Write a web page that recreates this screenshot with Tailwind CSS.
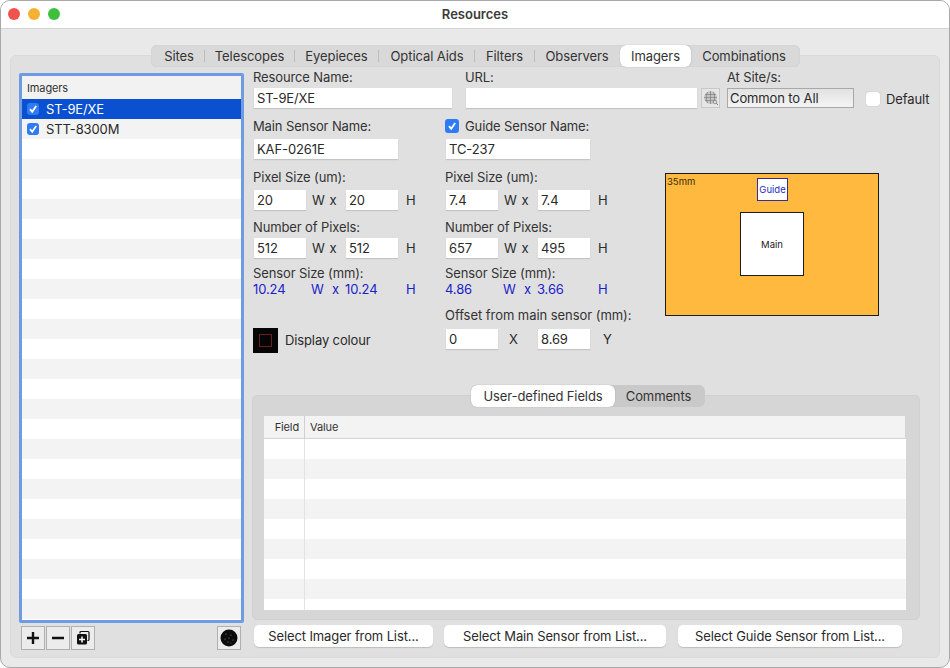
<!doctype html>
<html>
<head>
<meta charset="utf-8">
<script src="https://cdn.jsdelivr.net/npm/@tailwindcss/browser@4"></script>
</head>
<body class="bg-white overflow-hidden">
<div class="w-[950px] h-[668px] flex flex-col bg-[#e9e9e9] border border-[#a8a8a8] rounded-[10px] overflow-hidden font-['Inter',sans-serif] text-[13px] leading-[16px] tracking-[-0.12px] text-[#2a2a2a]">
  <div class="relative h-[28px] shrink-0 bg-white border-b border-[#d4d4d4] flex items-center justify-center">
    <div class="absolute left-[7px] top-[7px] flex gap-[8px]">
      <span class="w-[12px] h-[12px] rounded-full bg-[#f0524f]"></span>
      <span class="w-[12px] h-[12px] rounded-full bg-[#f6b133]"></span>
      <span class="w-[12px] h-[12px] rounded-full bg-[#3ec03f]"></span>
    </div>
    <span class="mb-[2px] font-semibold text-[13px] text-[#3a3a3a] tracking-[0px]">Resources</span>
  </div>

  <div class="relative flex-1 px-[9px] pb-[9px] pt-[26px]">
    <div class="absolute left-[150px] top-[16px] z-10 h-[22px] w-[649px] flex items-center rounded-[6px] bg-[#d9d9d9] shadow-[inset_0_0_1px_#bbb] text-[#333] tracking-[-0.08px]">
      <span class="w-[53px] pl-[3px] text-center">Sites</span><i class="w-px h-[12px] bg-[#bdbdbd]"></i>
      <span class="w-[89px] text-center">Telescopes</span><i class="w-px h-[12px] bg-[#bdbdbd]"></i>
      <span class="w-[83px] text-center">Eyepieces</span><i class="w-px h-[12px] bg-[#bdbdbd]"></i>
      <span class="w-[95px] pl-px text-center">Optical Aids</span><i class="w-px h-[12px] bg-[#bdbdbd]"></i>
      <span class="w-[59px] text-center">Filters</span><i class="w-px h-[12px] bg-[#bdbdbd]"></i>
      <span class="w-[84px] text-center">Observers</span>
      <span class="ml-px w-[71px] h-[22px] flex items-center justify-center bg-white rounded-[6px] shadow-[0_0_1px_#888]">Imagers</span>
      <span class="flex-1 pr-[3px] text-center">Combinations</span>
    </div>

    <div class="h-full rounded-[6px] bg-[#e0e0e0] border border-[#d9d9d9] flex pl-[8px] pr-[19px]">
      <!-- left column -->
      <div class="w-[225px] shrink-0 flex flex-col pt-[17px]">
        <div class="h-[550px] border-[3px] border-[#6f9be2] rounded-[2px] bg-white overflow-hidden flex flex-col">
          <div class="h-[23px] shrink-0 bg-[#f2f2f2] pl-[5px] flex items-center text-[11px] text-[#333]">Imagers</div>
          <div class="flex-1 bg-[repeating-linear-gradient(#ffffff_0_20px,#f3f3f3_20px_40px)]">
            <div class="h-[20px] bg-[#0a50d0] text-white flex items-center pl-[5px] gap-[7px]">
              <span class="w-[12px] h-[12px] rounded-[3px] bg-[#2f7bf5] flex items-center justify-center">
                <svg viewBox="0 0 12 12" class="w-[12px] h-[12px]"><path d="M3 6.2 5.2 8.8 9.2 3" fill="none" stroke="#fff" stroke-width="1.8"/></svg>
              </span>
              <span>ST-9E/XE</span>
            </div>
            <div class="h-[20px] flex items-center pl-[5px] gap-[7px]">
              <span class="w-[12px] h-[12px] rounded-[3px] bg-[#2f7bf5] flex items-center justify-center">
                <svg viewBox="0 0 12 12" class="w-[12px] h-[12px]"><path d="M3 6.2 5.2 8.8 9.2 3" fill="none" stroke="#fff" stroke-width="1.8"/></svg>
              </span>
              <span>STT-8300M</span>
            </div>
          </div>
        </div>
        <div class="flex items-center mt-[3px] pl-[2px]">
          <button class="w-[24px] h-[24px] bg-[#ececec] border border-[#b0b0b0] flex items-center justify-center">
            <svg viewBox="0 0 16 16" class="w-[16px] h-[16px]"><path d="M8 2v12M2 8h12" stroke="#111" stroke-width="2.4"/></svg>
          </button>
          <button class="w-[24px] h-[24px] ml-[1px] bg-[#ececec] border border-[#b0b0b0] flex items-center justify-center">
            <svg viewBox="0 0 16 16" class="w-[16px] h-[16px]"><path d="M2 8h12" stroke="#111" stroke-width="2.4"/></svg>
          </button>
          <button class="w-[24px] h-[24px] ml-[1px] bg-[#ececec] border border-[#b0b0b0] flex items-center justify-center">
            <svg viewBox="0 0 16 16" class="w-[16px] h-[16px]"><path d="M5 3.5V2.5a1 1 0 0 1 1-1h7a1 1 0 0 1 1 1v7a1 1 0 0 1-1 1h-.5" fill="none" stroke="#111" stroke-width="1.2"/><rect x="2" y="4" width="10" height="10.5" rx="1.5" fill="#111"/><path d="M7 6.5v6M4 9.5h6" stroke="#fff" stroke-width="1.5"/></svg>
          </button>
          <button class="w-[24px] h-[24px] ml-[122px] bg-[#ececec] border border-[#b0b0b0] flex items-center justify-center">
            <svg viewBox="0 0 18 18" class="w-[18px] h-[18px]"><circle cx="9" cy="9" r="8.5" fill="#0c0c0c"/><g fill="#999"><circle cx="6" cy="5" r=".5"/><circle cx="11" cy="6" r=".5"/><circle cx="5" cy="10" r=".5"/><circle cx="9" cy="9" r=".5"/><circle cx="13" cy="11" r=".5"/><circle cx="8" cy="13" r=".5"/><circle cx="11" cy="14" r=".4"/></g></svg>
          </button>
        </div>
      </div>

      <!-- right column -->
      <div class="flex-1 flex flex-col pl-[9px] pt-[13px]">
        <div class="flex h-[41px]">
          <div class="w-[212px] shrink-0">
            <div class="h-[16px] text-[#333]">Resource Name:</div>
            <div class="ml-px mt-[3px] w-[198px] h-[20px] bg-white shadow-[0_1px_1px_#c4c4c4] px-[3px] flex items-center">ST-9E/XE</div>
          </div>
          <div class="w-[262px] shrink-0">
            <div class="h-[16px] text-[#333]">URL:</div>
            <div class="mt-[3px] flex items-center">
              <div class="ml-px w-[231px] h-[20px] bg-white shadow-[0_1px_1px_#c4c4c4]"></div>
              <div class="ml-[4px] w-[19px] h-[20px] bg-[#e6e6e6] border border-[#c8c8c8] flex items-center justify-center">
                <svg viewBox="0 0 16 16" class="w-[16px] h-[16px]"><circle cx="7.500" cy="7.500" r="6.500" fill="#c4c4c4"/><path d="M1 7.500h13M2 4.500h11M2 10.500h11M7.500 1v13M4.500 2c-1.500 3.500-1.500 8 0 11M10.500 2c1.500 3.500 1.500 8 0 11" fill="none" stroke="#777" stroke-width=".6"/><circle cx="12" cy="12" r="1.800" fill="#ddd" stroke="#777" stroke-width=".7"/><path d="M13.300 13.300 15 15" stroke="#777" stroke-width=".9"/></svg>
              </div>
            </div>
          </div>
          <div class="w-[139px] shrink-0">
            <div class="h-[16px] text-[#333]">At Site/s:</div>
            <div class="mt-[3px] w-[127px] h-[20px] border border-[#a9a9a9] bg-gradient-to-b from-[#e2e2e2] to-[#f4f4f4] px-[2px] flex items-center">Common to All</div>
          </div>
          <div class="flex items-center pt-[19px] gap-[6px]">
            <span class="w-[14px] h-[14px] rounded-[3px] bg-white shadow-[0_0_1px_#999]"></span>
            <span>Default</span>
          </div>
        </div>

        <div class="flex h-[278px]">
          <!-- main sensor -->
          <div class="w-[192px] shrink-0 flex flex-col">
            <div class="mt-[8px] h-[16px] text-[#333]">Main Sensor Name:</div>
            <div class="ml-px mt-[5px] w-[144px] h-[20px] bg-white shadow-[0_1px_1px_#c4c4c4] px-[3px] flex items-center">KAF-0261E</div>
            <div class="mt-[10px] h-[16px] text-[#333]">Pixel Size (um):</div>
            <div class="mt-[5px] flex items-center h-[20px]">
              <div class="ml-px w-[52px] h-[20px] bg-white shadow-[0_1px_1px_#c4c4c4] px-[3px] flex items-center">20</div>
              <span class="ml-[6px] w-[14px]">W</span><span class="w-[14px] text-center">x</span>
              <div class="ml-[6px] w-[52px] h-[20px] bg-white shadow-[0_1px_1px_#c4c4c4] px-[3px] flex items-center">20</div>
              <span class="ml-[8px]">H</span>
            </div>
            <div class="mt-[9px] h-[16px] text-[#333]">Number of Pixels:</div>
            <div class="mt-[3px] flex items-center h-[20px]">
              <div class="ml-px w-[52px] h-[20px] bg-white shadow-[0_1px_1px_#c4c4c4] px-[3px] flex items-center">512</div>
              <span class="ml-[6px] w-[14px]">W</span><span class="w-[14px] text-center">x</span>
              <div class="ml-[6px] w-[52px] h-[20px] bg-white shadow-[0_1px_1px_#c4c4c4] px-[3px] flex items-center">512</div>
              <span class="ml-[8px]">H</span>
            </div>
            <div class="mt-[7px] h-[16px] text-[#333]">Sensor Size (mm):</div>
            <div class="flex h-[16px] text-[#1a22c8]">
              <span class="w-[58px]">10.24</span><span class="w-[21px]">W</span><span class="w-[13px]">x</span><span class="w-[61px]">10.24</span><span>H</span>
            </div>
            <div class="mt-[31px] flex items-center gap-[7px]">
              <div class="w-[25px] h-[25px] bg-[#050505] flex items-center justify-center"><span class="w-[13px] h-[13px] border border-[#6e1c1c]"></span></div>
              <span class="mb-px">Display colour</span>
            </div>
          </div>
          <!-- guide sensor -->
          <div class="w-[220px] shrink-0 flex flex-col">
            <div class="mt-[8px] h-[16px] flex items-center gap-[6px] text-[#333]">
              <span class="w-[14px] h-[14px] rounded-[3px] bg-[#2f7bf5] flex items-center justify-center">
                <svg viewBox="0 0 12 12" class="w-[12px] h-[12px]"><path d="M3 6.2 5.2 8.800 9.200 3" fill="none" stroke="#fff" stroke-width="1.8"/></svg>
              </span>Guide Sensor Name:
            </div>
            <div class="ml-px mt-[5px] w-[144px] h-[20px] bg-white shadow-[0_1px_1px_#c4c4c4] px-[3px] flex items-center">TC-237</div>
            <div class="mt-[10px] h-[16px] text-[#333]">Pixel Size (um):</div>
            <div class="mt-[5px] flex items-center h-[20px]">
              <div class="ml-px w-[52px] h-[20px] bg-white shadow-[0_1px_1px_#c4c4c4] px-[3px] flex items-center">7.4</div>
              <span class="ml-[6px] w-[14px]">W</span><span class="w-[14px] text-center">x</span>
              <div class="ml-[6px] w-[52px] h-[20px] bg-white shadow-[0_1px_1px_#c4c4c4] px-[3px] flex items-center">7.4</div>
              <span class="ml-[8px]">H</span>
            </div>
            <div class="mt-[9px] h-[16px] text-[#333]">Number of Pixels:</div>
            <div class="mt-[3px] flex items-center h-[20px]">
              <div class="ml-px w-[52px] h-[20px] bg-white shadow-[0_1px_1px_#c4c4c4] px-[3px] flex items-center">657</div>
              <span class="ml-[6px] w-[14px]">W</span><span class="w-[14px] text-center">x</span>
              <div class="ml-[6px] w-[52px] h-[20px] bg-white shadow-[0_1px_1px_#c4c4c4] px-[3px] flex items-center">495</div>
              <span class="ml-[8px]">H</span>
            </div>
            <div class="mt-[7px] h-[16px] text-[#333]">Sensor Size (mm):</div>
            <div class="flex h-[16px] text-[#1a22c8]">
              <span class="w-[58px]">4.86</span><span class="w-[21px]">W</span><span class="w-[13px]">x</span><span class="w-[61px]">3.66</span><span>H</span>
            </div>
            <div class="mt-[10px] h-[16px] text-[#333] tracking-[-0.05px]">Offset from main sensor (mm):</div>
            <div class="mt-[6px] flex items-center h-[20px]">
              <div class="ml-px w-[52px] h-[20px] bg-white shadow-[0_1px_1px_#c4c4c4] px-[3px] flex items-center">0</div>
              <span class="ml-[11px] w-[29px]">X</span>
              <div class="w-[52px] h-[20px] bg-white shadow-[0_1px_1px_#c4c4c4] px-[3px] flex items-center">8.69</div>
              <span class="ml-[13px]">Y</span>
            </div>
          </div>
          <!-- diagram -->
          <div class="relative mt-[63px] w-[214px] h-[143px] bg-[#ffb93f] border border-[#1c1c1c] shrink-0 text-[9.5px] leading-[11px] tracking-[0px]">
            <span class="absolute left-[1px] top-[2px] text-[#3a2a0a]">35mm</span>
            <div class="absolute left-[91px] top-[4px] w-[31px] h-[23px] bg-white border border-[#3a2a9a] flex items-center justify-center text-[#2a2ac0]">Guide</div>
            <div class="absolute left-[74px] top-[38px] w-[64px] h-[64px] bg-white border border-[#1c1c1c] flex items-center justify-center text-[#222]">Main</div>
          </div>
        </div>

        <!-- lower tabs -->
        <div class="relative -ml-px w-[668px] h-[225px] mt-[7px] rounded-[5px] bg-[#d6d6d6] border border-[#d0d0d0]">
          <div class="absolute left-[218px] -top-[11px] h-[22px] w-[234px] flex items-center rounded-[6px] bg-[#c9c9c9] text-[#333]">
            <span class="w-[144px] h-[22px] flex items-center justify-center bg-white rounded-[6px] shadow-[0_0_1px_#888]">User-defined Fields</span>
            <span class="flex-1 pr-[3px] text-center">Comments</span>
          </div>
          <div class="absolute left-[11px] top-[20px] w-[642px] h-[194px] bg-white flex flex-col">
            <div class="h-[23px] shrink-0 bg-[#f3f3f3] border-b border-r border-[#d4d4d4] flex items-center text-[11px] text-[#333]">
              <span class="w-[41px] h-[22px] flex items-center justify-end pr-[5px] border-r border-[#d0d0d0]">Field</span>
              <span class="pl-[5px]">Value</span>
            </div>
            <div class="flex-1 flex bg-[repeating-linear-gradient(#ffffff_0_20px,#f3f3f3_20px_40px)]">
              <div class="w-[41px] border-r border-[#e2e2e2]"></div>
            </div>
          </div>
        </div>

        <div class="flex mt-[5px] text-[13px]">
          <button class="ml-px w-[179px] h-[22px] bg-white rounded-[5px] shadow-[0_1px_1px_#bdbdbd]">Select Imager from List...</button>
          <button class="ml-[11px] w-[222px] h-[22px] bg-white rounded-[5px] shadow-[0_1px_1px_#bdbdbd]">Select Main Sensor from List...</button>
          <button class="ml-[12px] w-[224px] h-[22px] bg-white rounded-[5px] shadow-[0_1px_1px_#bdbdbd]">Select Guide Sensor from List...</button>
        </div>
      </div>
    </div>
  </div>
</div>
</body>
</html>
